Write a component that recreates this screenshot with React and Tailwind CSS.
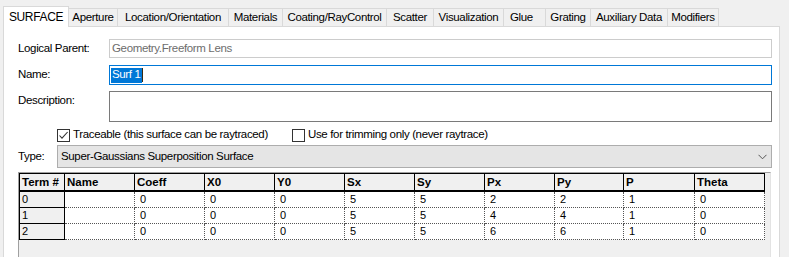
import React from "react";

const tabs = [
  { label: "Aperture", w: "w-[49px]" },
  { label: "Location/Orientation", w: "w-[111px]" },
  { label: "Materials", w: "w-[54px]" },
  { label: "Coating/RayControl", w: "w-[104px]" },
  { label: "Scatter", w: "w-[47px]" },
  { label: "Visualization", w: "w-[70px]" },
  { label: "Glue", w: "w-[42px]" },
  { label: "Grating", w: "w-[45px]" },
  { label: "Auxiliary Data", w: "w-[77px]" },
  { label: "Modifiers", w: "w-[51px]" },
];

const cols = [
  { h: "Name", w: "w-[70px]" },
  { h: "Coeff", w: "w-[70px]" },
  { h: "X0", w: "w-[70px]" },
  { h: "Y0", w: "w-[70px]" },
  { h: "Sx", w: "w-[70px]" },
  { h: "Sy", w: "w-[70px]" },
  { h: "Px", w: "w-[70px]" },
  { h: "Py", w: "w-[69px]" },
  { h: "P", w: "w-[71px]" },
  { h: "Theta", w: "w-[70px]" },
];

const rows = [
  ["0", "", "0", "0", "0", "5", "5", "2", "2", "1", "0"],
  ["1", "", "0", "0", "0", "5", "5", "4", "4", "1", "0"],
  ["2", "", "0", "0", "0", "5", "5", "6", "6", "1", "0"],
];

function CheckBox({ checked }) {
  return (
    <div className="w-[13px] h-[13px] border border-[#333333] bg-white flex items-center justify-center shrink-0">
      {checked && (
        <svg width="11" height="11" viewBox="0 0 11 11">
          <polyline points="1.5,5.5 4,8.2 9.6,2" fill="none" stroke="#333333" strokeWidth="1.1" />
        </svg>
      )}
    </div>
  );
}

export default function App() {
  return (
    <div className="w-[789px] h-[257px] overflow-hidden bg-[#f0f0f0] text-black font-['Liberation_Sans',Arial,sans-serif] text-[11.5px] tracking-[-0.35px] leading-none">
      {/* tab strip */}
      <div className="flex items-end h-[26px] pl-[3px]">
        <div className="relative z-10 w-[66px] h-[21px] mb-[-1px] bg-white border border-b-0 border-[#d9d9d9] flex items-center justify-center pb-[1px] text-[12px]">
          SURFACE
        </div>
        {tabs.map((t) => (
          <div
            key={t.label}
            className={`${t.w} h-[18px] border-t border-r border-[#d9d9d9] flex items-center ${t.label === "Glue" ? "justify-start pl-[6px]" : "justify-center"} whitespace-nowrap`}
          >
            {t.label}
          </div>
        ))}
      </div>

      {/* panel */}
      <div className="ml-[3px] w-[777px] h-[231px] bg-white border border-b-0 border-[#d9d9d9] pl-[14px] flex flex-col">
        <div className="mt-[12px] flex items-center h-[19px]">
          <div className="w-[91px]">Logical Parent:</div>
          <div className="w-[663px] h-[19px] border border-[#cccccc] flex items-center pl-[2px] text-[#6d6d6d]">
            Geometry.Freeform Lens
          </div>
        </div>
        <div className="mt-[7px] flex items-center h-[20px]">
          <div className="w-[91px]">Name:</div>
          <div className="w-[663px] h-[20px] border border-[#0078d7] flex items-center pl-[1px]">
            <span className="bg-[#0078d7] text-white h-[15px] flex items-center px-[1px]">Surf 1</span>
            <span className="w-[1px] h-[14px] bg-[#3a2a10]" />
          </div>
        </div>
        <div className="mt-[6px] flex items-start h-[31px]">
          <div className="w-[91px] pt-[4px]">Description:</div>
          <div className="w-[663px] h-[31px] border border-[#7a7a7a]" />
        </div>
        <div className="mt-[6px] flex items-center h-[14px] pl-[39px]">
          <CheckBox checked />
          <span className="ml-[3px] w-[219px] whitespace-nowrap">Traceable (this surface can be raytraced)</span>
          <CheckBox />
          <span className="ml-[3px] whitespace-nowrap">Use for trimming only (never raytrace)</span>
        </div>
        <div className="mt-[3px] flex items-center h-[23px]">
          <div className="w-[39px]">Type:</div>
          <div className="w-[715px] h-[23px] bg-[#e5e5e5] border border-[#adadad] flex items-center justify-between pl-[3px] pr-[4px]">
            <span>Super-Gaussians Superposition Surface</span>
            <svg width="9" height="6" viewBox="0 0 9 6">
              <polyline points="0.5,0.8 4.5,4.8 8.5,0.8" fill="none" stroke="#555555" strokeWidth="1" />
            </svg>
          </div>
        </div>

        {/* grid */}
        <div className="mt-[4px] w-[753px] flex-1 bg-[#f0f0f0] border-l border-t border-r border-l-[#a0a0a0] border-t-[#a0a0a0] border-r-[#e3e3e3]">
          <div className="border-l border-t border-black w-[746px] bg-white">
            {/* header */}
            <div className="flex h-[18px] border-b-2 border-black bg-[#f0f0f0] font-bold text-[11.5px] tracking-normal">
              <div className="w-[45px] border-r border-black flex items-center pl-[2px] pt-[1px]">Term #</div>
              {cols.map((c) => (
                <div key={c.h} className={`${c.w} border-r border-black flex items-center pl-[2px] pt-[1px]`}>
                  {c.h}
                </div>
              ))}
            </div>
            {rows.map((r, i) => (
              <div key={i} className="flex h-[16px] text-[11px]">
                <div className="w-[45px] border-r border-b border-black bg-[#f0f0f0] flex items-center pl-[2px] tracking-normal">
                  {r[0]}
                </div>
                {cols.map((c, j) => (
                  <div
                    key={c.h}
                    className={`${c.w} border-r border-b border-dotted border-[#555555] flex items-center pl-[5px] tracking-normal`}
                  >
                    {r[j + 1]}
                  </div>
                ))}
              </div>
            ))}
          </div>
        </div>
      </div>
    </div>
  );
}
